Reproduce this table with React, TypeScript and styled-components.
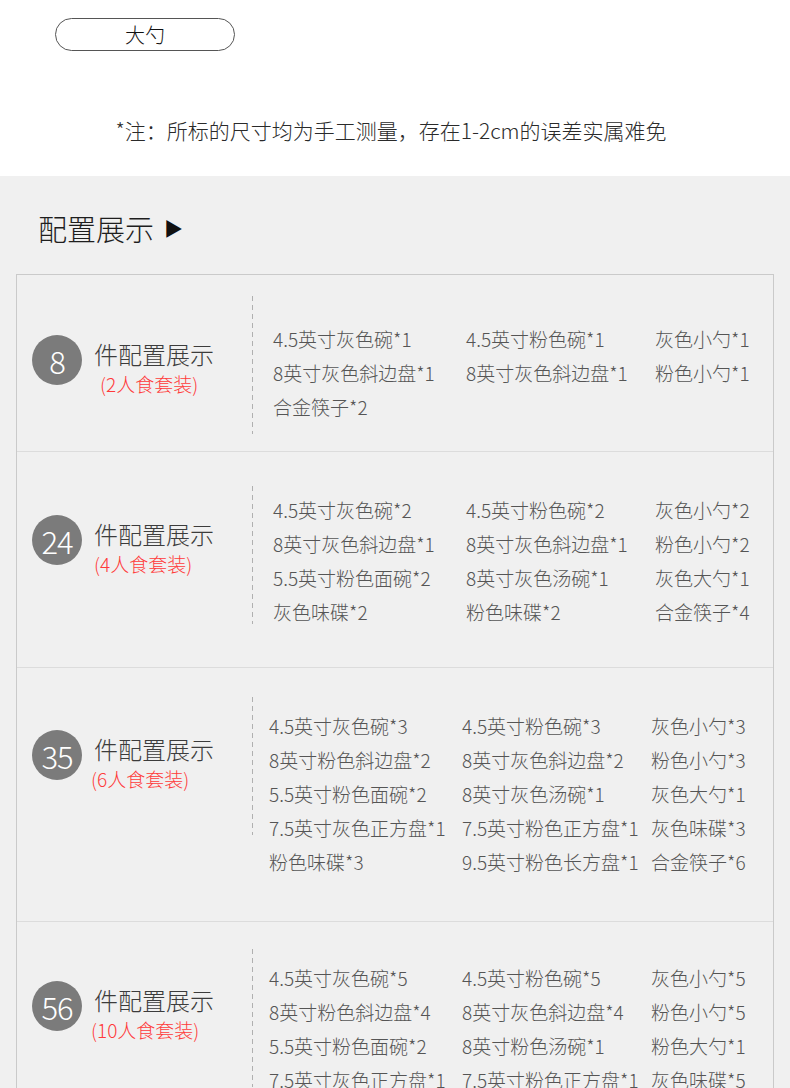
import React from "react";
import styled, { createGlobalStyle } from "styled-components";

// One set of dinnerware: number of pieces, people, and its items laid out 3 per line
type DishSet = {
  count: number;
  people: number;
  height: number;
  top: number;
  sideTop: number;
  itemsTop: number;
  indent: number;
  subIndent: number;
  items: string[][];
};

const sets: DishSet[] = [
  {
    count: 8,
    people: 2,
    height: 177,
    top: 21,
    sideTop: 39,
    itemsTop: 26,
    indent: 20,
    subIndent: 6,
    items: [
      ["4.5英寸灰色碗*1", "4.5英寸粉色碗*1", "灰色小勺*1"],
      ["8英寸灰色斜边盘*1", "8英寸灰色斜边盘*1", "粉色小勺*1"],
      ["合金筷子*2", "", ""],
    ],
  },
  {
    count: 24,
    people: 4,
    height: 216,
    top: 34,
    sideTop: 29,
    itemsTop: 7,
    indent: 20,
    subIndent: 0,
    items: [
      ["4.5英寸灰色碗*2", "4.5英寸粉色碗*2", "灰色小勺*2"],
      ["8英寸灰色斜边盘*1", "8英寸灰色斜边盘*1", "粉色小勺*2"],
      ["5.5英寸粉色面碗*2", "8英寸灰色汤碗*1", "灰色大勺*1"],
      ["灰色味碟*2", "粉色味碟*2", "合金筷子*4"],
    ],
  },
  {
    count: 35,
    people: 6,
    height: 254,
    top: 29,
    sideTop: 33,
    itemsTop: 12,
    indent: 16,
    subIndent: -3,
    items: [
      ["4.5英寸灰色碗*3", "4.5英寸粉色碗*3", "灰色小勺*3"],
      ["8英寸粉色斜边盘*2", "8英寸灰色斜边盘*2", "粉色小勺*3"],
      ["5.5英寸粉色面碗*2", "8英寸灰色汤碗*1", "灰色大勺*1"],
      ["7.5英寸灰色正方盘*1", "7.5英寸粉色正方盘*1", "灰色味碟*3"],
      ["粉色味碟*3", "9.5英寸粉色长方盘*1", "合金筷子*6"],
    ],
  },
  {
    count: 56,
    people: 10,
    height: 254,
    top: 27,
    sideTop: 32,
    itemsTop: 12,
    indent: 16,
    subIndent: -3,
    items: [
      ["4.5英寸灰色碗*5", "4.5英寸粉色碗*5", "灰色小勺*5"],
      ["8英寸粉色斜边盘*4", "8英寸灰色斜边盘*4", "粉色小勺*5"],
      ["5.5英寸粉色面碗*2", "8英寸粉色汤碗*1", "粉色大勺*1"],
      ["7.5英寸灰色正方盘*1", "7.5英寸粉色正方盘*1", "灰色味碟*5"],
    ],
  },
];

const App = () => {
  return (
    <>
      <GlobalStyle />
      <Page>
        <TopSection>
          <Pill>大勺</Pill>
          <Note>*注：所标的尺寸均为手工测量，存在1-2cm的误差实属难免</Note>
        </TopSection>

        <ConfigSection>
          <Heading>
            配置展示
            <Arrow>▶</Arrow>
          </Heading>

          <Table>
            {sets.map((set) => (
              <SetRow key={set.count} $height={set.height} $top={set.top}>
                <Side $top={set.sideTop}>
                  <CountBadge>{set.count}</CountBadge>
                  <SideText>
                    <SetTitle>件配置展示</SetTitle>
                    <SetPeople $indent={set.subIndent}>
                      ({set.people}人食套装)
                    </SetPeople>
                  </SideText>
                </Side>
                <Divider />
                <Items $top={set.itemsTop} $indent={set.indent}>
                  {set.items.flat().map((item, i) => (
                    <Item key={i}>{item}</Item>
                  ))}
                </Items>
              </SetRow>
            ))}
          </Table>
        </ConfigSection>
      </Page>
    </>
  );
};

export default App;

const GlobalStyle = createGlobalStyle`
  html, body {
    margin: 0;
    padding: 0;
    background: #f0f0f0;
  }

  body {
    font-family: "Noto Sans CJK SC", "Noto Sans", sans-serif;
  }
`;

const Page = styled.div`
  width: 790px;
  height: 1088px;
  overflow: hidden;
`;

const TopSection = styled.div`
  height: 176px;
  background: #ffffff;
  padding-top: 18px;
  box-sizing: border-box;
`;

const Pill = styled.div`
  margin-left: 55px;
  width: 180px;
  height: 33px;
  box-sizing: border-box;
  border: 1px solid #555;
  border-radius: 17px;
  display: flex;
  align-items: center;
  justify-content: center;
  font-size: 20px;
  font-weight: 300;
  color: #111;
`;

const Note = styled.div`
  margin-top: 65px;
  text-align: center;
  font-size: 21px;
  font-weight: 300;
  line-height: 28px;
  color: #2a2a2a;
  padding-right: 8px;
`;

const ConfigSection = styled.div`
  background: #f0f0f0;
  padding-top: 32px;
`;

const Heading = styled.div`
  display: flex;
  align-items: center;
  margin-left: 38px;
  font-size: 29px;
  font-weight: 300;
  line-height: 40px;
  color: #1e1e1e;
`;

const Arrow = styled.span`
  font-size: 19px;
  margin-left: 10px;
  color: #111;
`;

const Table = styled.div`
  margin: 26px 16px 0;
  border: 1px solid #cacaca;
  border-bottom: none;
`;

const SetRow = styled.div<{ $height: number; $top: number }>`
  display: flex;
  align-items: flex-start;
  height: ${(p) => p.$height}px;
  box-sizing: border-box;
  padding-top: ${(p) => p.$top}px;
  border-bottom: 1px solid #dcdcdc;
`;

const Side = styled.div<{ $top: number }>`
  width: 235px;
  box-sizing: border-box;
  padding-left: 15px;
  padding-top: ${(p) => p.$top}px;
  display: flex;
  align-items: flex-start;
`;

const CountBadge = styled.div`
  width: 50px;
  height: 50px;
  flex: none;
  border-radius: 50%;
  background: #7b7b7b;
  color: #ffffff;
  display: flex;
  align-items: center;
  justify-content: center;
  font-size: 31px;
  font-weight: 300;
  letter-spacing: -1px;
`;

const SideText = styled.div`
  margin-left: 12px;
  padding-top: 4px;
  display: flex;
  flex-direction: column;
`;

const SetTitle = styled.div`
  font-size: 24px;
  font-weight: 300;
  line-height: 30px;
  color: #3c3c3c;
`;

const SetPeople = styled.div<{ $indent: number }>`
  margin-top: 3px;
  margin-left: ${(p) => p.$indent}px;
  font-size: 19px;
  font-weight: 300;
  line-height: 24px;
  color: #ff3a3a;
`;

const Divider = styled.div`
  width: 1px;
  height: 138px;
  flex: none;
  background: repeating-linear-gradient(
    to bottom,
    #b0b0b0 0 5px,
    transparent 5px 9px
  );
`;

const Items = styled.div<{ $top: number; $indent: number }>`
  margin-top: ${(p) => p.$top}px;
  margin-left: ${(p) => p.$indent}px;
  display: grid;
  grid-template-columns: 193px 189px auto;
`;

const Item = styled.div`
  font-size: 19px;
  font-weight: 300;
  line-height: 34px;
  height: 34px;
  color: #555;
  white-space: nowrap;
`;
